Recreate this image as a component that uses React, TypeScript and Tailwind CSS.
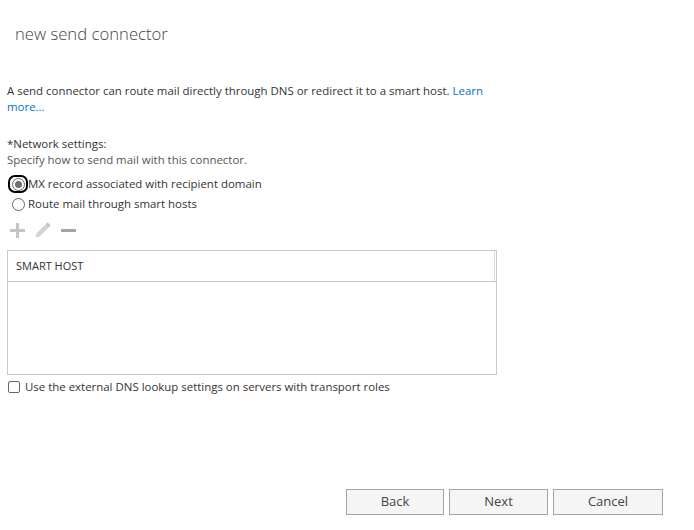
import { useState } from 'react'

const font = { fontFamily: '"Segoe UI", "Open Sans", "Noto Sans", sans-serif' }

function PlusIcon() {
  return (
    <svg width="15" height="15" viewBox="0 0 15 15">
      <rect x="6" y="0" width="3" height="15" fill="#c4c4c4" />
      <rect x="0" y="6" width="15" height="3" fill="#c4c4c4" />
    </svg>
  )
}

function PencilIcon() {
  return (
    <svg width="16" height="16" viewBox="0 0 16 16">
      <path d="M12.5 0.5 L15.5 3.5 L4.5 14.5 L0.5 15.5 L1.5 11.5 Z" fill="#d2d2d2" />
      <path d="M12.5 0.5 L15.5 3.5 L14 5 L11 2 Z" fill="#c2c2c2" />
    </svg>
  )
}

function MinusIcon() {
  return (
    <svg width="15" height="15" viewBox="0 0 15 15">
      <rect x="0" y="6" width="15" height="3" fill="#9ea8a6" />
    </svg>
  )
}

function Radio({ checked, focused }: { checked: boolean; focused?: boolean }) {
  return (
    <span
      className={`w-[20px] h-[18px] shrink-0 flex items-center justify-center rounded-[7px] ${
        focused ? 'border-2 border-black' : 'border-2 border-transparent'
      }`}
    >
      <span className="w-[13px] h-[13px] rounded-full border border-[#666] bg-white flex items-center justify-center">
        {checked && <span className="w-[7px] h-[7px] rounded-full bg-[#707070]" />}
      </span>
    </span>
  )
}

export default function App() {
  const [route, setRoute] = useState<'mx' | 'smart'>('mx')
  const [useExternal, setUseExternal] = useState(false)

  return (
    <div className="w-[694px] h-[530px] bg-white text-[#333] flex flex-col" style={font}>
      {/* header */}
      <div className="pl-[15px] pt-[22px] h-[83px]">
        <h1 className="text-[16.7px] font-light leading-[24px] text-[#444]">new send connector</h1>
      </div>

      {/* body */}
      <div className="px-[7px] text-[11.45px] leading-[16px] flex-1">
        <p className="w-[480px]">
          A send connector can route mail directly through DNS or redirect it to a smart host.{' '}
          <a className="text-[#0072c6]" href="#">Learn more...</a>
        </p>

        <div className="mt-[21px]">
          <div>*Network settings:</div>
          <div className="text-[#555]">Specify how to send mail with this connector.</div>
        </div>

        <div className="mt-[6px] flex flex-col">
          <label className="flex items-center h-[20px] ml-[1px]" onClick={() => setRoute('mx')}>
            <Radio checked={route === 'mx'} focused />
            <span>MX record associated with recipient domain</span>
          </label>
          <label className="flex items-center h-[20px] ml-[1px]" onClick={() => setRoute('smart')}>
            <Radio checked={route === 'smart'} />
            <span>Route mail through smart hosts</span>
          </label>
        </div>

        {/* toolbar */}
        <div className="mt-[8px] flex items-center gap-[10px] pl-[3px] h-[16px]">
          <PlusIcon />
          <PencilIcon />
          <MinusIcon />
        </div>

        {/* table */}
        <div className="mt-[12px] w-[490px] h-[125px] border border-[#c8c8c8] flex flex-col">
          <div className="h-[31px] border-b border-[#c8c8c8] flex items-center pl-[8px] text-[11px] uppercase text-[#333]">
            <span className="flex-1">Smart host</span>
            <span className="w-px h-full bg-[#dcdcdc] mr-[1px]" />
          </div>
          <div className="flex-1" />
        </div>

        <label className="mt-[3px] flex items-center h-[18px] gap-[5px]" onClick={() => setUseExternal(!useExternal)}>
          <span className="w-[12px] h-[12px] ml-[1px] border border-[#666] rounded-[2px] bg-white" />
          <span>Use the external DNS lookup settings on servers with transport roles</span>
        </label>
      </div>

      {/* footer */}
      <div className="flex justify-end gap-[5px] pr-[31px] pb-[15px]">
        <button className="w-[98px] h-[26px] border border-[#a1a7a8] bg-[#f5f5f5] text-[13px] text-[#444]">Back</button>
        <button className="w-[99px] h-[26px] border border-[#a1a7a8] bg-[#f5f5f5] text-[13px] text-[#444]">Next</button>
        <button className="w-[110px] h-[26px] border border-[#a1a7a8] bg-[#f5f5f5] text-[13px] text-[#444]">Cancel</button>
      </div>
    </div>
  )
}
